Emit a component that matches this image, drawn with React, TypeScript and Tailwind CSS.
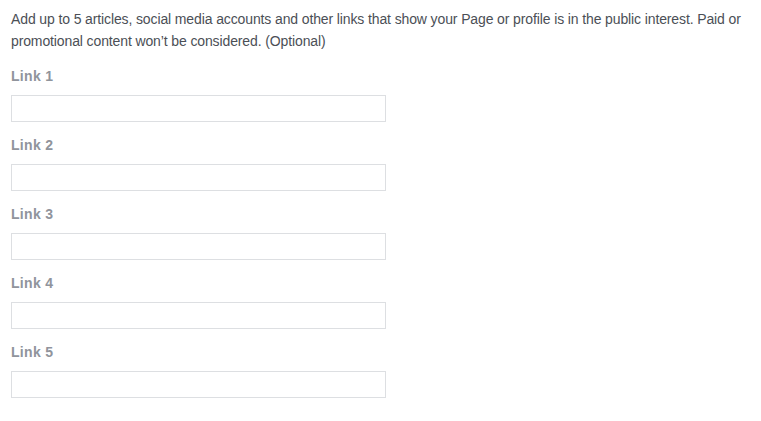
import React from "react";

const links = ["Link 1", "Link 2", "Link 3", "Link 4", "Link 5"];

export default function App() {
  return (
    <div className="min-h-screen bg-white pl-[11px] pr-[10px] pt-[8px] font-['Liberation_Sans',Arial,sans-serif]">
      <p className="mb-[1px] text-[14px] leading-[22px] tracking-[-0.12px] text-[#4b4f56]">
        Add up to 5 articles, social media accounts and other links that show your Page or
        profile is in the public interest. Paid or promotional content won’t be considered.
        (Optional)
      </p>
      <div className="flex flex-col">
        {links.map((label) => (
          <div key={label} className="pt-[15px]">
            <label className="block text-[14px] leading-[17px] tracking-[0.3px] font-bold text-[#90949c]">
              {label}
            </label>
            <input
              type="text"
              className="mt-[10px] block w-[375px] h-[27px] border border-[#dddfe2] bg-white outline-none"
            />
          </div>
        ))}
      </div>
    </div>
  );
}
